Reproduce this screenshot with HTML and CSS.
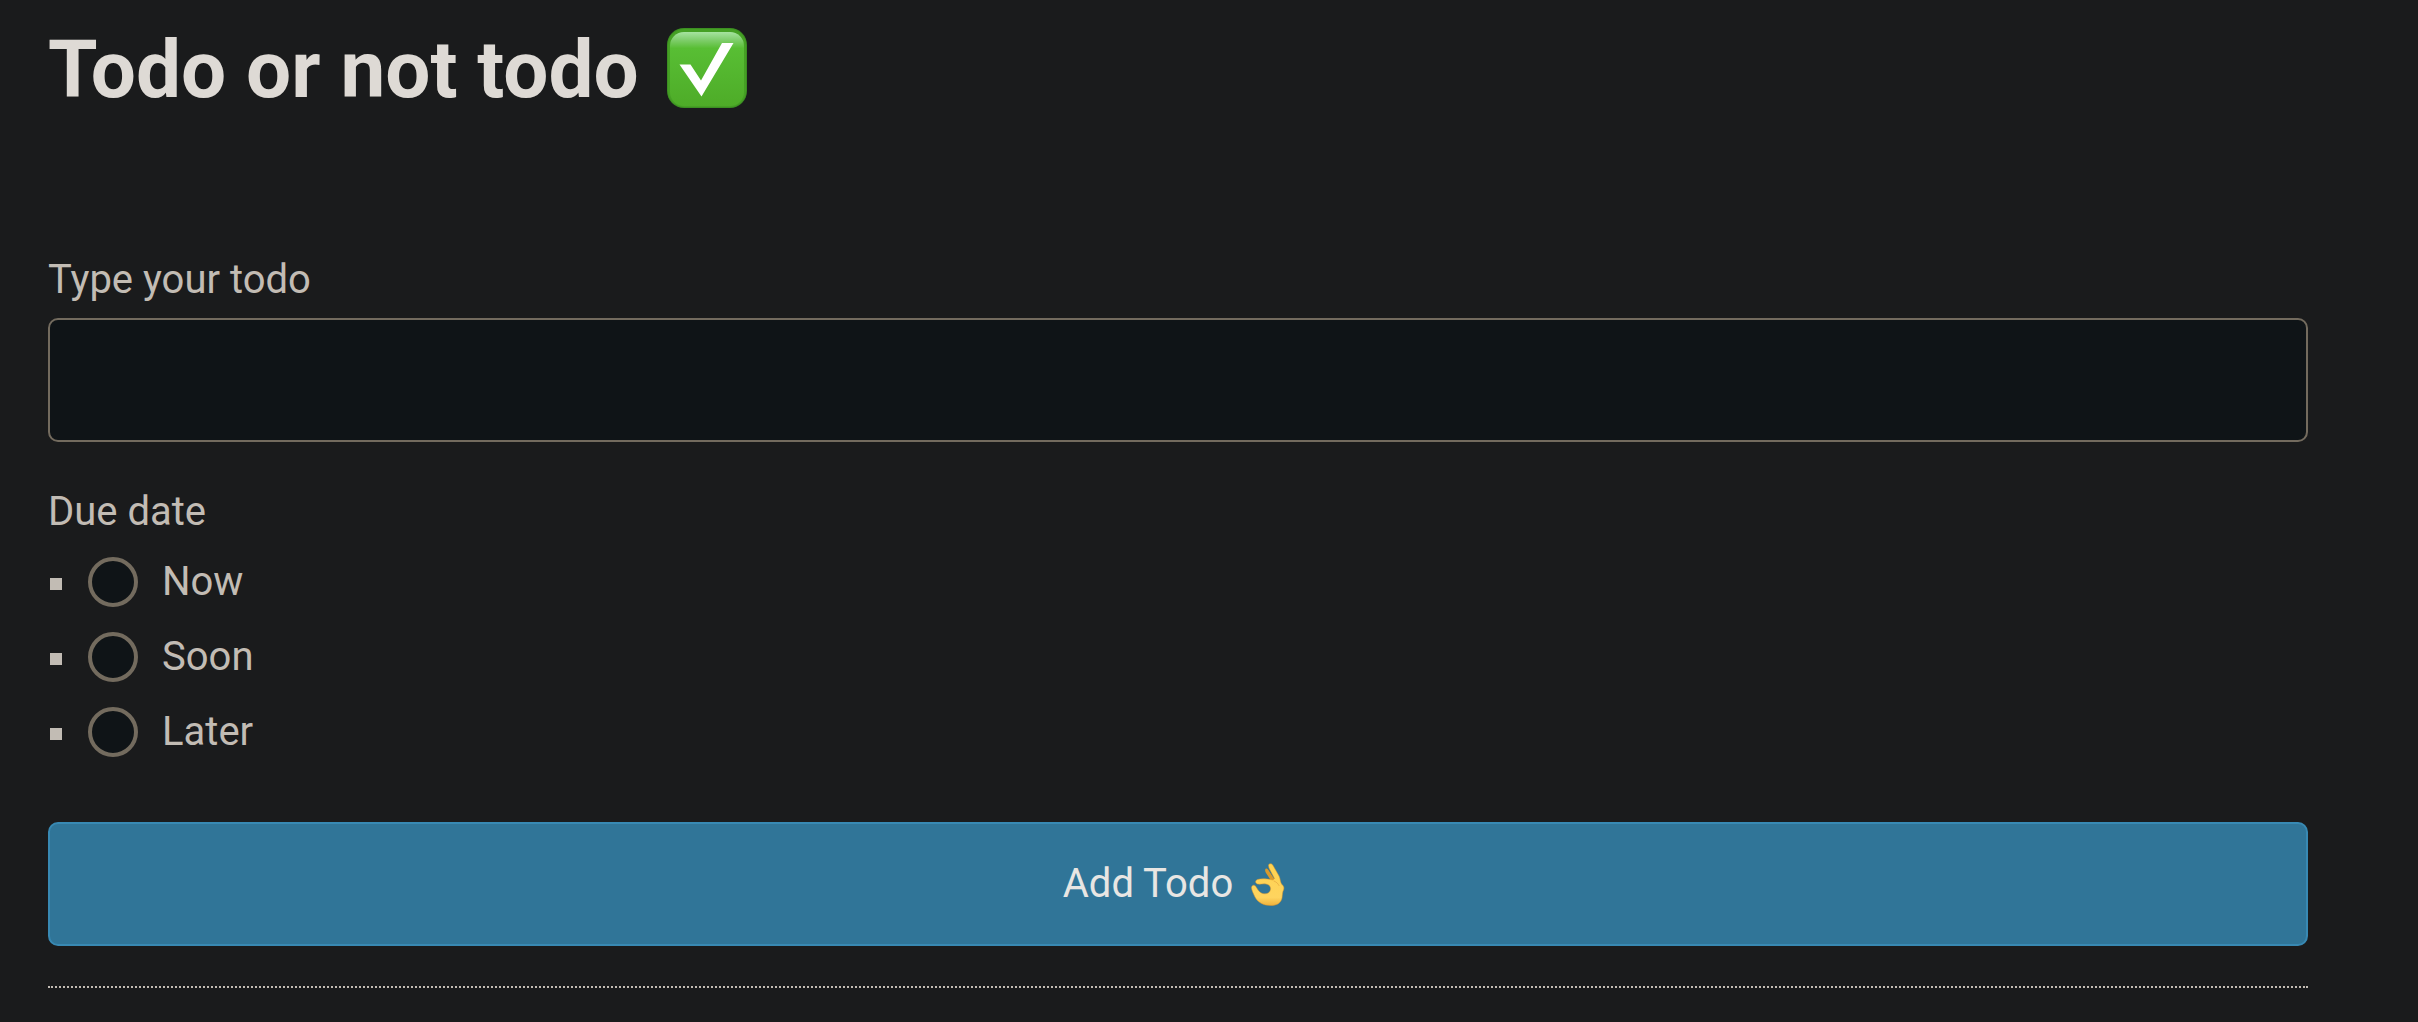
FILE: index.html
```html
<!DOCTYPE html>
<html lang="en">

<head>
    <meta charset="UTF-8">
    <meta name="viewport" content="width=device-width, initial-scale=1.0">
    <title>Todo or not todo</title>
    <link rel="stylesheet" href="styles.css">
</head>

<body>
    <main>
        <h1>Todo or not todo
            <svg class="check-icon" viewBox="0 0 80 80" aria-hidden="true">
                <defs>
                    <linearGradient id="check-face" x1="0" y1="0" x2="0" y2="1">
                        <stop offset="0" stop-color="#a6e3a0" />
                        <stop offset="0.1" stop-color="#82cf70" />
                        <stop offset="0.22" stop-color="#58be34" />
                        <stop offset="1" stop-color="#4eac28" />
                    </linearGradient>
                </defs>
                <rect width="80" height="80" rx="17" fill="#3c8f22" />
                <rect x="1" y="1" width="78" height="78" rx="16" fill="#45a024" />
                <rect x="3" y="4" width="74" height="74" rx="14" fill="url(#check-face)" />
                <path d="M12.5 36.5H23.5L34 52.5L55 15H66.5L34.5 68.5Z" fill="#fff" />
            </svg>
        </h1>

        <form id="todo-form" onsubmit="return false">
            <div class="form-group">
                <label for="todo">Type your todo</label>
                <input type="text" id="todo" name="todo">
            </div>

            <fieldset>
                <legend>Due date</legend>
                <ul>
                    <li>
                        <input type="radio" id="now" name="due-date" value="now">
                        <label for="now">Now</label>
                    </li>
                    <li>
                        <input type="radio" id="soon" name="due-date" value="soon">
                        <label for="soon">Soon</label>
                    </li>
                    <li>
                        <input type="radio" id="later" name="due-date" value="later">
                        <label for="later">Later</label>
                    </li>
                </ul>
            </fieldset>

            <button type="submit">
                Add Todo
                <svg class="ok-icon" viewBox="-8 0 50 43" aria-hidden="true">
                    <defs>
                        <linearGradient id="ok-skin" x1="0" y1="0" x2="0" y2="43" gradientUnits="userSpaceOnUse">
                            <stop offset="0" stop-color="#ffd34f" />
                            <stop offset="0.8" stop-color="#fed45f" />
                            <stop offset="1" stop-color="#eeb03a" />
                        </linearGradient>
                    </defs>
                    <!-- ring finger behind -->
                    <path d="M14.500 6C15.500 5 17 6 18 8L24 17L20 18C18 14 15.500 11 14.500 9C14 7.500 14 6.500 14.500 6Z" fill="#d99a2c" />
                    <path d="M17.500 2C18.500 0 21 .5 22 2.500L28 13C29.500 16 29 18.500 30.500 21C32.500 23 33.500 24 32.500 27C31.500 29 31.500 31 31 35C30 40 26 42.500 20 42.500C12 42.500 7 39.500 4 34C2 30 .5 26.500.5 24.500C1 22 3 21.500 4.500 23C6.500 26 8 29.500 11.500 30.500C15.500 31.500 19 30 19.500 26.500C20 23.500 18 21.500 15 21C12 20.500 9 21.500 6.500 21C4 20 4 17.500 6.500 16.500C10 15.500 15 15.500 22 17L23.500 15.500L18 5Z" fill="url(#ok-skin)" stroke="#e0982a" stroke-width=".5" />
                    <path d="M23 18C25.500 19 27 20.500 28 22.500" fill="none" stroke="#edb548" stroke-linecap="round" />
                </svg>
            </button>
        </form>

        <hr>
    </main>
</body>

</html>
```

FILE: styles.css
```css
* {
    box-sizing: border-box;
}

body {
    margin: 0;
    background-color: #1a1b1c;
    color: #c2bcb4;
    font-family: Roboto, "Liberation Sans", sans-serif;
    font-size: 40px;
    line-height: 56px;
}

main {
    padding: 20px 110px 34px 48px;
}

h1 {
    display: flex;
    align-items: center;
    gap: 28px;
    margin: 0 0 132px;
    color: #dedad5;
    font-size: 80px;
    line-height: 100px;
}

.check-icon {
    width: 80px;
    height: 80px;
    margin-bottom: 4px;
}

.form-group {
    margin-bottom: 42px;
}

.form-group label {
    display: block;
    margin-bottom: 10px;
}

input[type="text"] {
    display: block;
    width: 100%;
    height: 124px;
    padding: 0 32px;
    border: 2px solid #736b5e;
    border-radius: 10px;
    background-color: #0f1417;
    color: inherit;
    font: inherit;
}

fieldset {
    margin: 0 0 65px;
    padding: 0;
    border: none;
}

legend {
    padding: 0;
    margin-bottom: 17px;
}

ul {
    display: grid;
    gap: 25px;
    margin: 0;
    padding: 0 0 0 2px;
    list-style: none;
}

li {
    display: flex;
    align-items: center;
    height: 50px;
}

li::before {
    content: "";
    width: 12px;
    height: 12px;
    margin: 4px 26px 0 0;
    background-color: #c2bcb4;
}

input[type="radio"] {
    appearance: none;
    width: 50px;
    height: 50px;
    margin: 0 24px 0 0;
    border: 4px solid #736b5e;
    border-radius: 50%;
    background-color: #0f1417;
}

input[type="radio"]:checked {
    background-color: #307598;
}

button {
    display: flex;
    align-items: center;
    justify-content: center;
    gap: 10px;
    width: 100%;
    height: 124px;
    border: 2px solid #3889b3;
    border-radius: 10px;
    background-color: #307598;
    color: #e8e6e3;
    font: inherit;
    cursor: pointer;
}

.ok-icon {
    width: 50px;
    height: 43px;
}

hr {
    margin: 40px 0 0;
    border: none;
    border-top: 2px dotted #c2bcb4;
}
```
